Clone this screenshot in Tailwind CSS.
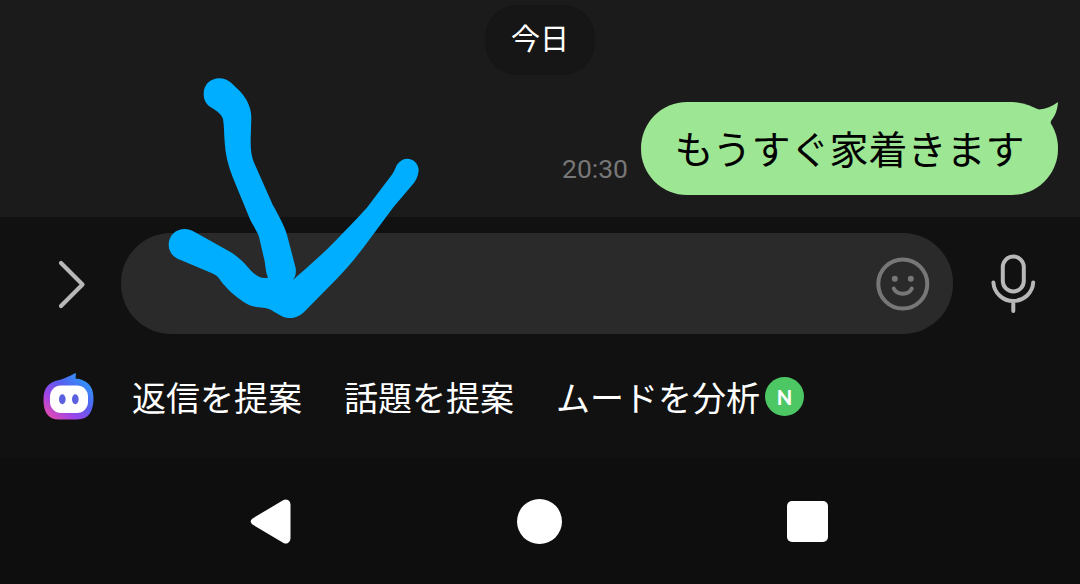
<!DOCTYPE html>
<html lang="ja">
<head>
  <meta charset="UTF-8">
  <meta name="viewport" content="width=device-width, initial-scale=1.0">
  <title>トーク</title>
  <script src="https://cdn.jsdelivr.net/npm/@tailwindcss/browser@4"></script>
</head>
<body class="relative w-[1080px] h-[584px] overflow-hidden bg-[#0e0e0e] font-['Noto_Sans_CJK_JP',sans-serif]">

  <!-- Chat -->
  <main class="h-[217px] bg-[#1b1b1b] flex flex-col pt-[5px]">
    <div class="self-center w-[110px] h-[70px] rounded-[32px] bg-[#161616] text-white text-[29px] leading-[65px] text-center">今日</div>

    <div class="flex items-end justify-end pr-[22px] mt-[27px]">
      <span class="font-[Roboto,sans-serif] text-[26.5px] leading-8 text-[#777777] mr-[13px] mb-[10px]">20:30</span>
      <div class="relative w-[417px] h-[93px] rounded-[46px] bg-[#9de693] text-black text-[39px] leading-[90px] text-center whitespace-nowrap">
        もうすぐ家着きます
        <!-- Bubble tail -->
        <svg class="absolute top-0 right-0" width="30" height="30" viewBox="0 0 30 30" fill="#9de693">
          <path d="M4 5 L11 7.500 C18 7 24 4.500 30 0 C29.500 8 27 14 23 19 L22 24 L14 22 Z"/>
        </svg>
      </div>
    </div>
  </main>

  <!-- Input area -->
  <section class="h-[241px] bg-[#111111] pt-4">
    <div class="flex items-center">
      <svg class="ml-[52px]" width="40" height="60" viewBox="0 0 40 60" fill="none" stroke="#b8b8b8" stroke-width="4.2" stroke-linecap="round" stroke-linejoin="round">
        <path d="M9 9 L30.500 30.500 L9 52"/>
      </svg>
      <div class="ml-[29px] w-[832px] h-[101px] rounded-[50px] bg-[#2a2a2a] flex items-center justify-end pr-[22px]">
        <svg width="56" height="56" viewBox="0 0 56 56" fill="none" stroke="#777777" stroke-width="4" stroke-linecap="round">
          <circle cx="27.800" cy="28" r="24.500"/>
          <circle cx="19.800" cy="22.800" r="3" fill="#777777" stroke="none"/>
          <circle cx="35.800" cy="22.800" r="3" fill="#777777" stroke="none"/>
          <path d="M18.800 32.500 C22 39.500 33.600 39.500 36.800 32.500"/>
        </svg>
      </div>
      <svg class="ml-[35px]" width="50" height="64" viewBox="0 0 50 64" fill="none" stroke="#b8b8b8" stroke-width="4" stroke-linecap="round">
        <rect x="14.800" y="4.500" width="21" height="35" rx="10.500"/>
        <path d="M5.400 30.500 C6 41 15 49 25.300 49 C35.600 49 44.600 41 45.200 30.500 M25.300 49 V59"/>
      </svg>
    </div>

    <!-- Suggestions -->
    <div class="flex items-center mt-[33px] h-[60px] text-white text-[34px] leading-[50px] whitespace-nowrap">
      <svg class="ml-[42px] mr-[38px] shrink-0" width="52" height="52" viewBox="0 0 52 52">
        <defs>
          <linearGradient id="bot" x1="0.100" y1="0.950" x2="0.850" y2="0.150">
            <stop offset="0" stop-color="#e24bb0"/>
            <stop offset="0.330" stop-color="#9a45ea"/>
            <stop offset="0.650" stop-color="#5560f0"/>
            <stop offset="1" stop-color="#3096fa"/>
          </linearGradient>
        </defs>
        <path d="M34 2 L33.500 7.500 C44 8.500 51.500 14 51.500 27 C51.500 40 47 48.500 35 48.500 H17 C6 48.500 1.500 41 1.500 29 C1.500 17 6 11.500 17 9 C23 7.500 27 5 34 2 Z" fill="url(#bot)"/>
        <rect x="8" y="14.500" width="38" height="27.500" rx="11" fill="#ffffff"/>
        <ellipse cx="20.300" cy="28.300" rx="3.300" ry="5" fill="#5a60e0"/>
        <ellipse cx="33.300" cy="28.300" rx="3.300" ry="5" fill="#5a60e0"/>
      </svg>
      <div class="flex gap-[42px]">
        <span>返信を提案</span>
        <span>話題を提案</span>
        <span>ムードを分析</span>
      </div>
      <span class="ml-[5px] mb-[2px] size-[39px] rounded-full bg-[#4cc764] font-[Lato,sans-serif] font-black text-[20px] leading-[40px] text-center">N</span>
    </div>
  </section>

  <!-- System navigation -->
  <nav class="h-[126px] flex pt-[39px]">
    <svg class="ml-[249px]" width="44" height="48" viewBox="0 0 44 48" fill="#ffffff">
      <path d="M3.500 21.500 L34.500 3 Q36.500 1.800 39 3 Q41.500 4.200 41.500 7.500 V41.500 Q41.500 44.700 39 46 Q36.500 47.200 34.500 46 L3.500 27.500 Q-0.200 24.500 3.500 21.500 Z"/>
    </svg>
    <div class="ml-[224px] mt-[2px] size-[45px] rounded-full bg-white"></div>
    <div class="ml-[225px] mt-[4px] size-[41px] rounded-[5px] bg-white"></div>
  </nav>

  <!-- Hand-drawn arrow over the chat -->
  <svg class="absolute left-[150px] top-[60px]" width="290" height="270" viewBox="0 0 870 810" fill="#00aeff">
    <path d="M161 102 C161 74 181 55 208 55 C222 55 234 60 244 69 L270 94 C292 118 304 145 304 172 L302 240 C302 270 304 290 314 312 L368 434 C390 474 408 504 415 540 L437 624 C440 645 433 660 414 673 C460 632 510 590 550 549 C590 507 620 477 650 444 L725 345 C736 330 736 322 742 313 C750 302 760 296 772 296 C791 296 806 312 806 332 C804 350 797 364 786 376 L730 442 L650 550 C620 590 590 626 562 655 L466 752 C452 767 436 774 419 774 C405 774 396 770 385 763 C368 752 356 744 340 743 C315 741 300 739 280 725 C255 708 230 686 212 662 C204 650 198 645 186 640 L92 600 C69 593 56 574 56 554 C56 527 77 507 104 507 C114 507 124 510 134 516 L240 575 C262 588 280 606 295 623 C312 643 330 659 354 653 C348 640 347 625 344 604 L327 530 C322 514 312 502 300 478 L250 356 C235 318 228 290 225 258 C222 230 223 200 219 176 C212 160 200 153 186 144 C170 135 161 121 161 102 Z"/>
  </svg>

</body>
</html>
